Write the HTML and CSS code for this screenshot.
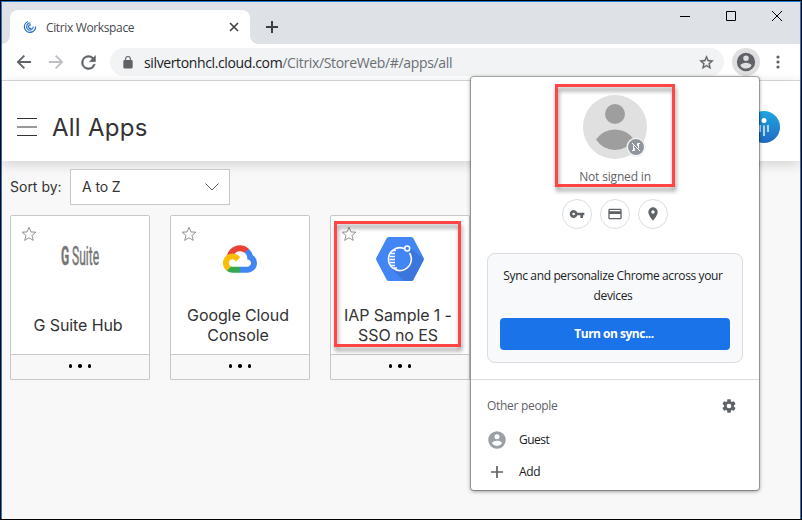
FILE: index.html
```html
<!DOCTYPE html>
<html lang="en">
<head>
<meta charset="utf-8">
<title>Citrix Workspace</title>
<link rel="stylesheet" href="styles.css">
</head>
<body>
<div class="window">
  <div class="tabbar">
    <div class="tab">
      <svg class="favicon" width="14" height="14" viewBox="0 0 14 14" fill="none" stroke="#2a6fc4" stroke-width="1.300"><path d="M5 1.500A5.600 5.600 0 1 0 12.600 6.500"/><path d="M7.500 2.900A3.700 3.700 0 0 0 4.300 8.800C6 11 10 10.300 10.300 6.500" stroke="#3c86d6"/><path d="M8 5.200A1.700 1.700 0 1 0 8.300 8"/></svg>
      <span class="tab-title">Citrix Workspace</span>
      <svg class="tab-close" width="10" height="10" viewBox="0 0 10 10" stroke="#3c4043" stroke-width="1.600"><path d="M1 1l8 8M9 1L1 9"/></svg>
    </div>
    <svg class="new-tab" width="12" height="12" viewBox="0 0 12 12" stroke="#3c4043" stroke-width="2"><path d="M6 0v12M0 6h12"/></svg>
    <div class="controls">
      <svg width="10" height="10" viewBox="0 0 10 10"><path d="M0 5.500h10" stroke="#000"/></svg>
      <svg width="10" height="10" viewBox="0 0 10 10"><path d="M.5.5h9v9h-9z" fill="none" stroke="#000"/></svg>
      <svg width="10" height="10" viewBox="0 0 10 10"><path d="M0 0l10 10M10 0L0 10" stroke="#000"/></svg>
    </div>
  </div>
  <div class="toolbar">
    <svg class="nav" width="20" height="20" viewBox="0 0 24 24"><path fill="#5f6368" d="M20.500 10.800H7.500l5.700-5.700L11.600 3.500 3.100 12l8.500 8.500 1.600-1.600-5.700-5.700h13z"/></svg>
    <svg class="nav" width="20" height="20" viewBox="0 0 24 24"><path fill="#bdbfc2" d="M3.500 10.800h13l-5.700-5.700 1.600-1.600 8.500 8.500-8.500 8.500-1.600-1.600 5.700-5.700h-13z"/></svg>
    <svg class="nav" width="21" height="21" viewBox="0 0 24 24"><path fill="#5f6368" d="M17.650 6.350A7.960 7.960 0 0 0 12 4a8 8 0 1 0 7.730 10h-2.080A6 6 0 1 1 12 6c1.660 0 3.140.69 4.220 1.780L13 11h7V4z" stroke="#5f6368" stroke-width=".5"/></svg>
    <div class="omnibox">
      <svg width="14" height="14" viewBox="0 0 24 24"><path fill="#5f6368" d="M18 8.500h-1V6.500a5 5 0 0 0-10 0v2H6a2 2 0 0 0-2 2V21a2 2 0 0 0 2 2h12a2 2 0 0 0 2-2V10.500a2 2 0 0 0-2-2zM8.900 6.500a3.100 3.100 0 0 1 6.200 0v2H8.900z"/></svg>
      <span class="url"><span class="host">silvertonhcl.cloud.com</span><span class="path">/Citrix/StoreWeb/#/apps/all</span></span>
      <svg class="bookmark" width="17" height="17" viewBox="0 0 24 24"><path fill="#5f6368" stroke="#5f6368" stroke-width=".4" d="M22 9.240l-7.190-.62L12 2 9.190 8.630 2 9.240l5.460 4.730L5.820 21 12 17.270 18.180 21l-1.630-7.030zM12 15.400l-3.760 2.270 1-4.280-3.320-2.880 4.380-.38L12 6.100l1.710 4.040 4.380.38-3.320 2.880 1 4.280z"/></svg>
    </div>
    <div class="profile"><svg width="22" height="22" viewBox="0 0 24 24"><path fill="#5f6368" d="M12 2a10 10 0 1 0 0 20 10 10 0 0 0 0-20zm0 3a3 3 0 1 1 0 6 3 3 0 0 1 0-6zm0 14.200a7.200 7.200 0 0 1-6-3.220c.03-1.990 4-3.080 6-3.080s5.970 1.090 6 3.080a7.200 7.200 0 0 1-6 3.220z"/></svg></div>
    <svg class="more" width="4" height="14" viewBox="0 0 4 14" fill="#5f6368"><circle cx="2" cy="2" r="1.600"/><circle cx="2" cy="7" r="1.600"/><circle cx="2" cy="12" r="1.600"/></svg>
  </div>
  <header class="app-header">
    <svg width="20" height="18" viewBox="0 0 20 18"><path fill="#333" d="M0 0h20v1H0zM0 17h20v1H0z"/><path fill="#999" d="M0 8h20v2H0z"/></svg>
    <h1>All Apps</h1>
    <svg class="user" width="32" height="32" viewBox="0 0 32 32"><defs><linearGradient id="ug" x1="0" y1="0" x2="0" y2="1"><stop offset="0" stop-color="#1fa7e0"/><stop offset="1" stop-color="#2168c4"/></linearGradient></defs><circle cx="16" cy="16" r="16" fill="url(#ug)"/><circle cx="16" cy="9.500" r="2.500" fill="#fff"/><path d="M16 14.500V25M12 14v7M20 14v7" stroke="#d5e8f8" stroke-width="1.600"/></svg>
  </header>
  <main>
    <div class="sort"><span class="sort-label">Sort by:</span><div class="select"><span>A to Z</span><svg width="14" height="8" viewBox="0 0 14 8" fill="none" stroke="#555"><path d="M.5.5L7 7l6.500-6.500"/></svg></div></div>
    <div class="cards">
      <article class="card">
        <svg class="fav" width="16" height="16" viewBox="0 0 16 16"><path class="star" d="M8 1.200l1.900 4.700 5 .3-3.900 3.200 1.300 5L8 11.700l-4.300 2.700 1.300-5L1.100 6.200l5-.3z"/></svg>
        <div class="logo"><span class="gsuite"><b>G</b> Suite</span></div>
        <div class="name"><span>G Suite Hub</span></div>
        <div class="dots"><i></i><i></i><i></i></div>
      </article>
      <article class="card">
        <svg class="fav" width="16" height="16" viewBox="0 0 16 16"><path class="star" d="M8 1.200l1.900 4.700 5 .3-3.900 3.200 1.300 5L8 11.700l-4.300 2.700 1.300-5L1.100 6.200l5-.3z"/></svg>
        <div class="logo"><svg width="34" height="28" viewBox="0 0 256 206"><path fill="#ea4335" d="M170.250 56.820l22.250-22.250 1.480-9.370C153.440-11.680 88.980-7.500 52.430 33.910 42.270 45.410 34.740 59.760 30.720 74.570l7.970-1.120 44.500-7.340 3.440-3.520c19.800-21.740 53.270-24.670 76.130-6.170z"/><path fill="#4285f4" d="M224.210 73.920a100.250 100.250 0 0 0-30.220-48.720l-31.230 31.230a55.510 55.510 0 0 1 20.380 44.040v5.540c15.350 0 27.800 12.450 27.800 27.800s-12.450 27.570-27.800 27.570h-55.670l-5.470 5.930v33.340l5.470 5.230h55.670c39.930.31 72.550-31.490 72.860-71.420a72.300 72.300 0 0 0-31.790-60.540"/><path fill="#34a853" d="M71.870 205.800h55.590v-44.500H71.870c-3.960 0-7.880-.85-11.480-2.500l-7.880 2.420-22.410 22.250-1.950 7.580c12.570 9.490 27.970 14.820 43.720 14.750"/><path fill="#fbbc05" d="M71.870 61.430C31.940 61.660-.24 94.220 0 134.150a72.300 72.300 0 0 0 28.150 56.870l32.250-32.250c-13.990-6.320-20.210-22.790-13.890-36.780s22.790-20.210 36.780-13.890c6.170 2.790 11.100 7.720 13.890 13.890l32.250-32.250A72.220 72.220 0 0 0 71.870 61.430"/></svg></div>
        <div class="name"><span>Google Cloud</span><span>Console</span></div>
        <div class="dots"><i></i><i></i><i></i></div>
      </article>
      <article class="card">
        <svg class="fav" width="16" height="16" viewBox="0 0 16 16"><path class="star" d="M8 1.200l1.900 4.700 5 .3-3.900 3.200 1.300 5L8 11.700l-4.300 2.700 1.300-5L1.100 6.200l5-.3z"/></svg>
        <div class="logo"><svg width="48" height="44" viewBox="0 0 48 44"><path fill="#4285f4" d="M13 0h22q1.500 0 2.300 1.300L47.500 20.500q.8 1.500 0 3L37.300 42.700Q36.500 44 35 44H13q-1.500 0-2.300-1.300L.5 23.500q-.8-1.500 0-3L10.700 1.300Q11.500 0 13 0z"/><path fill="#3b76dc" d="M33 10l13.500 11q1.300 1.200.7 2.800L37.300 42.700Q36.500 44 35 44h-7L14 30q10 6 17-1 6-7 2-19z"/><g fill="none" stroke="#fff"><path stroke-width="1.600" d="M28 11.500a11.400 11.400 0 1 0 5.500 4.500"/><circle cx="31.200" cy="11.600" r="2.500" stroke-width="1.500"/><path stroke-width="1.300" d="M17 13.500h3M15 16.500h4M14 19.500h5M13.500 22.500H19M14 25.500h5M15 28.500h4M18 31h3"/></g></svg></div>
        <div class="name"><span>IAP Sample 1 -</span><span>SSO no ES</span></div>
        <div class="dots"><i></i><i></i><i></i></div>
        <div class="mark mark-app"></div>
      </article>
    </div>
  </main>
  <aside class="popup">
    <div class="avatar"><svg width="64" height="64" viewBox="0 0 64 64"><circle cx="32" cy="32" r="32" fill="#e0e0e0"/><circle cx="32" cy="19" r="10" fill="#9e9e9e"/><path fill="#9e9e9e" d="M13 44.500Q20 34.500 32 34.500t19 10Q44 55 32 55T13 44.500z"/></svg>
      <svg class="badge" width="20" height="20" viewBox="0 0 20 20"><circle cx="10" cy="10" r="9.300" fill="#fff" stroke="#ddd" stroke-width=".6"/><circle cx="10" cy="10" r="8" fill="#8f959b"/><g fill="none" stroke="#fff" stroke-width="1"><path d="M6 6l8 8M7.500 8.500v4.500M6 13.500h2.500v-2.500M12.500 11.500V7M14 6.500h-2.500V9"/></g></svg></div>
    <div class="status"><span>Not signed in</span></div>
    <div class="shortcuts">
      <div><svg width="16" height="16" viewBox="0 0 24 24"><path fill="#5f6368" d="M12.650 10A6 6 0 1 0 12.650 14H17v4h4v-4h2v-4zM7 14a2 2 0 1 1 0-4 2 2 0 0 1 0 4z"/></svg></div>
      <div><svg width="16" height="16" viewBox="0 0 24 24"><path fill="#5f6368" d="M20 4H4a2 2 0 0 0-2 2v12a2 2 0 0 0 2 2h16a2 2 0 0 0 2-2V6a2 2 0 0 0-2-2zm0 14H4v-6h16zm0-10H4V6h16z"/></svg></div>
      <div><svg width="16" height="16" viewBox="0 0 24 24"><path fill="#5f6368" d="M12 2a7 7 0 0 0-7 7c0 5.250 7 13 7 13s7-7.750 7-13a7 7 0 0 0-7-7zm0 9.500a2.500 2.500 0 1 1 0-5 2.500 2.500 0 0 1 0 5z"/></svg></div>
    </div>
    <section class="sync"><p><span>Sync and personalize Chrome across your</span><br><span>devices</span></p><button>Turn on sync...</button></section>
    <section class="people">
      <div class="people-head"><span>Other people</span><svg width="16" height="16" viewBox="0 0 24 24"><path fill="#5f6368" d="M19.430 12.980c.04-.32.070-.64.070-.98s-.03-.66-.07-.98l2.110-1.650c.19-.15.24-.42.12-.64l-2-3.460c-.12-.22-.39-.3-.61-.22l-2.490 1c-.52-.4-1.080-.73-1.690-.98l-.38-2.650A.49.49 0 0 0 14 2h-4c-.25 0-.46.18-.49.420l-.38 2.650c-.61.25-1.170.59-1.690.98l-2.490-1c-.23-.09-.49 0-.61.22l-2 3.460c-.13.22-.07.49.12.64l2.110 1.650c-.04.32-.07.65-.07.98s.03.66.070.98l-2.110 1.650c-.19.15-.24.42-.12.64l2 3.460c.12.22.39.3.61.22l2.490-1c.52.4 1.080.73 1.690.98l.38 2.650c.03.24.24.42.490.42h4c.25 0 .46-.18.490-.42l.38-2.650c.61-.25 1.170-.59 1.690-.98l2.490 1c.23.09.49 0 .61-.22l2-3.460c.12-.22.07-.49-.12-.64zM12 15.500a3.500 3.500 0 1 1 0-7 3.500 3.500 0 0 1 0 7z"/></svg></div>
      <div class="row"><svg width="20" height="20" viewBox="0 0 24 24"><path fill="#9aa0a6" d="M12 1.500a10.500 10.500 0 1 0 0 21 10.500 10.500 0 0 0 0-21zm0 3.500a3 3 0 1 1 0 6 3 3 0 0 1 0-6zm0 14.200a7.200 7.200 0 0 1-6-3.220c.03-1.990 4-3.080 6-3.080s5.970 1.090 6 3.080a7.200 7.200 0 0 1-6 3.220z"/></svg><span class="guest">Guest</span></div>
      <div class="row"><svg width="20" height="20" viewBox="0 0 20 20" stroke="#5f6368" stroke-width="1.700"><path d="M10 4v12M4 10h12"/></svg><span>Add</span></div>
    </section>
    <div class="mark mark-profile"></div>
  </aside>
</div>
</body>
</html>
```
FILE: styles.css
```css
* { box-sizing: border-box; }
body { margin: 0; background: #000; font-family: "Open Sans", sans-serif; }
svg { display: block; flex: none; }
span { white-space: nowrap; }
.window { position: relative; width: 802px; height: 520px; border: 1px solid #000; background: #f8f8f8; overflow: hidden; box-shadow: inset 1px 1px #1a7bd0, inset -1px 0 #1a7bd0; padding: 1px 1px 0; display: flex; flex-direction: column; }
.tabbar { height: 42px; flex: none; background: #dee1e6; display: flex; align-items: flex-start; padding-left: 8px; }
.tab { position: relative; width: 240px; height: 34px; margin-top: 8px; background: #fff; border-radius: 8px 8px 0 0; display: flex; align-items: center; padding: 0 11px 0 13px; }
.tab::before, .tab::after { content: ""; position: absolute; bottom: 0; width: 8px; height: 8px; }
.tab::before { left: -8px; background: radial-gradient(circle at 0 0, transparent 7.500px, #fff 8px); }
.tab::after { right: -8px; background: radial-gradient(circle at 100% 0, transparent 7.500px, #fff 8px); }
.tab-title { margin-left: 9px; font-size: 12px; letter-spacing: -.36px; color: #45494d; }
.tab-close { margin-left: auto; }
.new-tab { margin: 19px 0 0 16px; }
.controls { display: flex; gap: 36px; margin: 9px 18px 0 auto; }
.toolbar { height: 37px; flex: none; background: #fff; border-bottom: 1px solid #dadce0; display: flex; align-items: center; padding-left: 12px; }
.nav { margin-right: 12px; }
.nav:nth-child(3) { margin-right: 11px; }
.omnibox { width: 614px; height: 28px; border-radius: 14px; background: #f1f3f4; display: flex; align-items: center; padding: 0 9px 0 11px; }
.url { margin-left: 9px; font-size: 14px; letter-spacing: -.34px; }
.host { color: #202124; letter-spacing: -.37px; }
.path { color: #6b6f74; }
.bookmark { margin-left: auto; }
.profile { width: 28px; height: 28px; border-radius: 50%; background: #dfdfdf; margin-left: 8px; display: grid; place-items: center; }
.more { margin-left: 16px; }
.app-header { height: 80px; flex: none; background: #fff; box-shadow: 0 3px 12px rgba(0,0,0,.16); display: flex; align-items: center; padding: 12px 20px 0 15px; font-family: Inter, sans-serif; }
h1 { margin: 0 0 0 15px; font-size: 24px; letter-spacing: .25px; font-weight: 400; color: #333; white-space: nowrap; }
.user { margin: -1px 0 0 auto; }
main { padding: 8px; font-family: Inter, sans-serif; color: #333; }
.sort { display: flex; align-items: center; }
.sort-label { width: 60px; font-size: 14px; margin-top: -2px; }
.select { width: 160px; height: 36px; border: 1px solid #c8c8c8; background: #fff; display: flex; align-items: center; justify-content: space-between; padding: 0 10px 0 11px; font-size: 14px; }
.select span { margin-top: -1px; letter-spacing: -.1px; }
.cards { display: flex; gap: 20px; margin-top: 10px; }
.card { position: relative; width: 140px; height: 165px; border: 1px solid #c8c8c8; border-radius: 2px 2px 0 0; background: #fff; display: flex; flex-direction: column; }
.fav { position: absolute; left: 10px; top: 10px; }
.star { fill: none; stroke: #888; stroke-width: .9; }
.logo { height: 86px; display: grid; place-items: center; }
.gsuite { font-family: Roboto, sans-serif; font-size: 25px; line-height: 22px; color: #757575; -webkit-text-stroke: .5px #757575; width: 80px; text-align: center; transform: translateY(-2px) scaleX(.48); }
.name { height: 52px; display: flex; flex-direction: column; align-items: center; justify-content: center; font-size: 16px; letter-spacing: -.1px; line-height: 20px; padding: 0 4px 7px 0; }
.dots { margin-top: auto; height: 25px; border-top: 1px solid #c8c8c8; background: #f8f8f8; display: flex; justify-content: center; gap: 6px; padding-top: 9px; }
.dots i { width: 3.500px; height: 3.500px; border-radius: 50%; background: #000; }
.mark { position: absolute; border: 3px solid #ff4545; filter: drop-shadow(1px 4px 2px rgba(0,0,0,.4)); pointer-events: none; }
.mark-app { left: 3px; top: 5px; width: 127px; height: 126px; }
.popup { position: absolute; left: 470px; top: 76px; width: 288px; height: 413px; background: #fff; border-radius: 3px; box-shadow: 0 0 0 1px rgba(0,0,0,.25), 0 1px 4px rgba(0,0,0,.5); display: flex; flex-direction: column; align-items: center; padding-top: 18px; color: #202124; font-size: 12px; }
.avatar { position: relative; }
.badge { position: absolute; left: 43px; top: 42px; }
.status { height: 20px; line-height: 20px; margin-top: 8px; color: #5f6368; letter-spacing: -.17px; }
.shortcuts { display: flex; gap: 8px; margin-top: 12px; }
.shortcuts div { width: 30px; height: 30px; border: 1px solid #dadce0; border-radius: 50%; display: grid; place-items: center; }
.sync { width: 256px; height: 110px; margin-top: 24px; border: 1px solid #dadce0; border-radius: 8px; background: #f8f9fb; padding: 12px; }
.sync p { margin: 0 4px 12px 0; line-height: 20px; text-align: center; letter-spacing: -.36px; }
.sync button { display: block; width: 230px; height: 32px; border: 0; border-radius: 4px; background: #1a73e8; color: #fff; font: 700 12px "Open Sans", sans-serif; letter-spacing: -.5px; padding: 0 2px 1px 0; }
.people { width: 100%; margin-top: 16px; border-top: 1px solid #dadce0; padding: 10px 16px 0; letter-spacing: -.3px; }
.people-head { height: 32px; display: flex; align-items: center; justify-content: space-between; color: #5f6368; padding-right: 6px; }
.people-head span, .row span { margin-top: -1px; }
.row { height: 32px; display: flex; align-items: center; gap: 12px; }
.people-head + .row { margin-top: 2px; }
.guest { letter-spacing: -.5px; }
.mark-profile { left: 84px; top: 7px; width: 120px; height: 103px; }
```
